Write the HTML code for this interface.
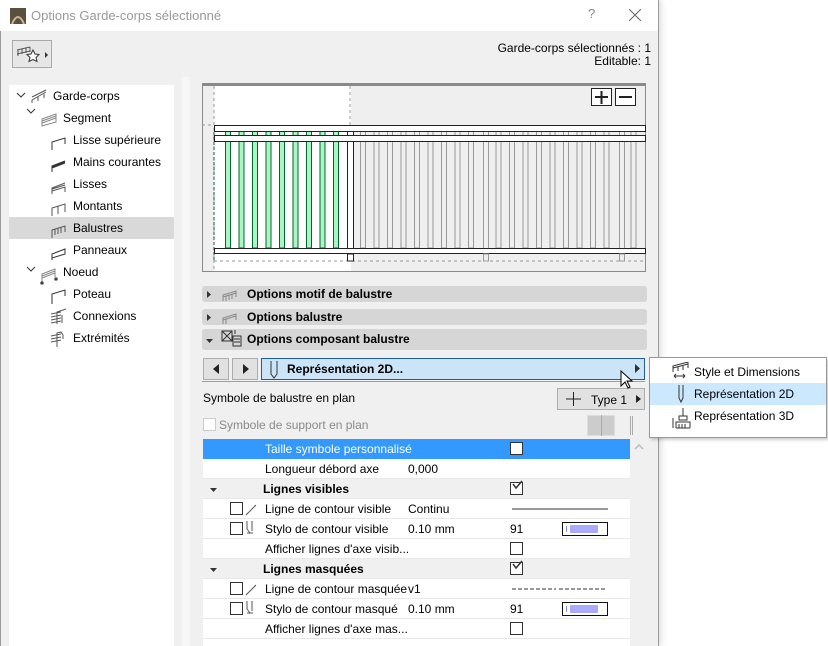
<!DOCTYPE html>
<html><head><meta charset="utf-8"><style>
*{box-sizing:border-box;margin:0;padding:0}
body{width:828px;height:646px;background:#fff;font-family:"Liberation Sans",sans-serif;font-size:12px;color:#000;position:relative;overflow:hidden}
.a{position:absolute}
.dlg{left:0;top:0;width:659px;height:646px;background:#f0f0f0;border-right:1px solid #9a9a9a;border-left:1px solid #9a9a9a;box-shadow:2px 0 6px rgba(0,0,0,.15)}
.title{left:0;top:0;width:658px;height:31px;background:#fff}
.tree{left:9px;top:85px;width:165px;height:561px;background:#fff}
.ti{position:absolute;height:22px;line-height:22px;font-size:12px}
.sec{position:absolute;left:202px;width:445px;background:#d6d6d6;border-radius:3px;font-weight:bold;font-size:12px}
.row{position:absolute;left:203px;width:427px;height:20px;line-height:20px;border-bottom:1px solid #e8e8e8;background:#fff}
.row.g{background:#f0f0f0}
.cb{position:absolute;width:13px;height:13px;border:1px solid #333;background:#fff}
.t{position:absolute;white-space:nowrap}
</style></head><body>
<div class="a dlg"></div>
<div class="a title"></div>
<svg class="a" style="left:10px;top:8px" width="16" height="16"><rect width="16" height="16" fill="#5a5040"/><path d="M2 16 Q8 2 14 16" stroke="#c8b890" stroke-width="2" fill="none"/></svg>
<div class="a t" style="left:31px;top:8px;font-size:13px;color:#999">Options Garde-corps sélectionné</div>
<div class="a t" style="left:588px;top:6px;font-size:13px;color:#888">?</div>
<svg class="a" style="left:629px;top:9px" width="12" height="12"><path d="M0 0L12 12M12 0L0 12" stroke="#666" stroke-width="1"/></svg>
<div class="a" style="left:12px;top:40px;width:40px;height:28px;border:1px solid #aaa;background:#e6e6e6"></div>
<svg class="a" style="left:16px;top:44px" width="34" height="20"><path d="M1 6L14 3M2 6v6M6 5v5M10 4v5M14 3v5M1 10L14 7" stroke="#555" fill="none"/><path d="M17 6l2 4 4 .5-3 3 1 4-4-2-4 2 1-4-3-3 4-.5z" stroke="#333" fill="#fff"/><path d="M29 8l3 3-3 3z" fill="#333"/></svg>
<div class="a t" style="right:177px;top:42px;text-align:right;line-height:13px">Garde-corps sélectionnés : 1<br>Editable: 1</div>

<div class="a tree"></div>
<div class="a" style="left:9px;top:217px;width:165px;height:22px;background:#d9d9d9"></div>
<div class="a" style="left:182px;top:77px;width:8px;height:569px;background:#f7f7f7"></div>
<svg class="a" style="left:14px;top:88px" width="60" height="260" fill="none" stroke="#555">
<path d="M3 5l4 4 4-4M13 21l4 4 4-4M13 179l4 4 4-4" stroke="#333"/>
<path d="M18 12L32 4M18 12v3M24 9v4M30 6v4M18 9L32 2" />
<path d="M28 31L42 26v8L28 38zM28 33l14-5M28 35l14-5" stroke="#888"/>
<path d="M38 62V54L51 50v6" stroke="#333"/>
<path d="M38 84V78L51 73M38 79l13-5M38 80l13-5" stroke="#333"/>
<path d="M38 106v-6l13-5M38 101l13-4M38 103l13-4v5" stroke="#555"/>
<path d="M38 128v-8l13-4v8M44 118v8" stroke="#555"/>
<path d="M38 150v-8l13-4v6M41 141v6M44 140v6M47 139v6" stroke="#555"/>
<path d="M38 172v-6l13-5v5l-13 4z" stroke="#333"/>
<path d="M28 194v-8l13-5v8M28 188l13-5M28 190l13-5" stroke="#888"/><circle cx="28" cy="195" r="1.3" fill="#333"/><circle cx="42" cy="191" r="1.3" fill="#333"/>
<path d="M38 216v-10l13-4v6" stroke="#333"/>
<path d="M37 226l10-2M37 229l10-2M37 232l10-2M37 235l10-2M43 236v-12l9-3M48 235v-8" stroke="#555"/>
<path d="M37 248l10-2M37 251l10-2M37 254l10-2M43 259v-14l4 -1 2 3v4" stroke="#555"/>
</svg>
<div class="ti" style="left:53px;top:85px">Garde-corps</div>
<div class="ti" style="left:63px;top:107px">Segment</div>
<div class="ti" style="left:73px;top:129px">Lisse supérieure</div>
<div class="ti" style="left:73px;top:151px">Mains courantes</div>
<div class="ti" style="left:73px;top:173px">Lisses</div>
<div class="ti" style="left:73px;top:195px">Montants</div>
<div class="ti" style="left:73px;top:217px">Balustres</div>
<div class="ti" style="left:73px;top:239px">Panneaux</div>
<div class="ti" style="left:63px;top:261px">Noeud</div>
<div class="ti" style="left:73px;top:283px">Poteau</div>
<div class="ti" style="left:73px;top:305px">Connexions</div>
<div class="ti" style="left:73px;top:327px">Extrémités</div>

<!-- preview -->
<svg class="a" style="left:202px;top:83px" width="445" height="190">
<rect x="0.5" y="0.5" width="443" height="188" fill="#efefef" stroke="#8a8a8a"/>
<rect x="1" y="1" width="442" height="2" fill="#8a8a8a"/>
<rect x="12" y="3" width="137" height="185" fill="#fff"/>
<path d="M12 3v185M148 3v42M0 42h11M12 178h431" stroke="#999" stroke-dasharray="3 3"/>
<path d="M12 49v130" stroke="#063" stroke-dasharray="3 2"/>
<g stroke="#999" fill="none">
<rect x="158.5" y="48" width="5" height="117"/><rect x="172" y="48" width="5" height="117"/><rect x="185.5" y="48" width="5" height="117"/><rect x="199" y="48" width="5" height="117"/><rect x="212.5" y="48" width="5" height="117"/><rect x="226" y="48" width="5" height="117"/><rect x="239.5" y="48" width="5" height="117"/><rect x="253" y="48" width="5" height="117"/><rect x="266.5" y="48" width="5" height="117"/><rect x="294" y="48" width="5" height="117"/><rect x="307.5" y="48" width="5" height="117"/><rect x="321" y="48" width="5" height="117"/><rect x="334.5" y="48" width="5" height="117"/><rect x="348" y="48" width="5" height="117"/><rect x="361.5" y="48" width="5" height="117"/><rect x="375" y="48" width="5" height="117"/><rect x="388.5" y="48" width="5" height="117"/><rect x="402" y="48" width="5" height="117"/><rect x="429" y="48" width="5" height="117"/>
</g>
<g stroke="#999" fill="#efefef"><rect x="281.5" y="48" width="5" height="130"/><rect x="417.5" y="48" width="5" height="130"/></g>
<g stroke="#063" fill="#aaf5c0">
<rect x="23.5" y="48" width="5" height="117"/><rect x="37" y="48" width="5" height="117"/><rect x="50.5" y="48" width="5" height="117"/><rect x="64" y="48" width="5" height="117"/><rect x="77.5" y="48" width="5" height="117"/><rect x="91" y="48" width="5" height="117"/><rect x="104.5" y="48" width="5" height="117"/><rect x="118" y="48" width="5" height="117"/><rect x="131.5" y="48" width="5" height="117"/>
</g>
<rect x="145.5" y="48" width="6" height="130" fill="#fff" stroke="#222"/>
<g stroke="#222" fill="#fff"><rect x="12.5" y="42.5" width="431" height="6"/><rect x="12.5" y="52.5" width="431" height="6"/><rect x="12.5" y="165.5" width="431" height="5"/></g>
<g stroke="#999" fill="#efefef"><rect x="281.5" y="171" width="5" height="7"/><rect x="417.5" y="171" width="5" height="7"/></g>
<rect x="145.5" y="171" width="6" height="7" fill="#fff" stroke="#222"/>
<g stroke="#222" fill="#fff"><rect x="389.5" y="5.5" width="20" height="17"/><rect x="413.5" y="5.5" width="20" height="17"/></g>
<path d="M393 14h13M399.5 8v13M417 14h13" stroke="#222" stroke-width="2"/>
</svg>

<div class="sec" style="top:286px;height:16px;line-height:16px"><span class="t" style="left:45px">Options motif de balustre</span></div>
<div class="sec" style="top:309px;height:16px;line-height:16px"><span class="t" style="left:45px">Options balustre</span></div>
<div class="sec" style="top:329px;height:21px;line-height:21px"><span class="t" style="left:45px">Options composant balustre</span></div>
<svg class="a" style="left:205px;top:287px" width="40" height="62" fill="none" stroke="#888">
<path d="M2 4l4 3.5-4 3.5z" fill="#333" stroke="none"/><path d="M2 27l4 3.5-4 3.5z" fill="#333" stroke="none"/><path d="M1 52l7 0-3.5 4z" fill="#333" stroke="none"/>
<path d="M18 14v-6l13-4v6M18 10l13-4M21 9v5M24 8v5M27 7v5"/>
<path d="M18 37v-6l13-4v6M18 33l13-4M21 32v5"/>
<path d="M17 44h10v10H17zM17 44l10 10M27 44l-10 10M30 43v4M28 49h8v10h-8zM29 52h6M29 55h6" stroke="#333"/>
</svg>

<!-- nav row -->
<div class="a" style="left:203px;top:358px;width:26px;height:22px;background:#e1e1e1;border:1px solid #adadad"></div>
<div class="a" style="left:232px;top:358px;width:26px;height:22px;background:#e1e1e1;border:1px solid #adadad"></div>
<svg class="a" style="left:203px;top:358px" width="60" height="22"><path d="M16 6l-6 5 6 5z" fill="#222"/><path d="M40 6l6 5-6 5z" fill="#222"/></svg>
<div class="a" style="left:261px;top:358px;width:384px;height:22px;background:#cce4f7;border:1px solid #1f5fa0"></div>
<svg class="a" style="left:268px;top:360px" width="14" height="20"><path d="M3 1v13l3 4 3-4V1" stroke="#333" fill="none"/></svg>
<div class="a t" style="left:287px;top:362px;font-weight:bold">Représentation 2D...</div>
<svg class="a" style="left:635px;top:364px" width="6" height="10"><path d="M0 0l5 4.5L0 9z" fill="#333"/></svg>
<div class="a" style="left:202px;top:381px;width:443px;height:1px;background:#a0a0a0"></div>
<div class="a t" style="left:203px;top:391px">Symbole de balustre en plan</div>
<div class="a" style="left:557px;top:388px;width:88px;height:22px;background:#e1e1e1;border:1px solid #adadad"></div>
<svg class="a" style="left:564px;top:391px" width="80" height="16"><path d="M2 8h15M9.5 1v14" stroke="#222"/><path d="M72 4l5 4-5 4z" fill="#222"/></svg>
<div class="a t" style="left:591px;top:393px">Type 1</div>
<div class="a" style="left:203px;top:418px;width:13px;height:13px;border:1px solid #ccc;background:#fff"></div>
<div class="a t" style="left:219px;top:418px;color:#8a8a8a">Symbole de support en plan</div>
<div class="a" style="left:587px;top:415px;width:28px;height:21px;background:#ccc;border:1px solid #ddd"></div>
<div class="a" style="left:601px;top:415px;width:1px;height:21px;background:#aaa"></div>
<div class="a" style="left:630px;top:416px;width:1px;height:19px;background:#aaa"></div>
<div class="a" style="left:632px;top:416px;width:1px;height:19px;background:#aaa"></div>

<!-- table -->
<div class="a" style="left:203px;top:439px;width:427px;height:207px;background:#fff"></div>
<div class="row" style="top:439px;background:#3399ff;color:#fff;border:none"><span class="t" style="left:62px">Taille symbole personnalisé</span></div>
<div class="row" style="top:459px"><span class="t" style="left:62px">Longueur débord axe</span><span class="t" style="left:205px">0,000</span></div>
<div class="row g" style="top:479px"><span class="t" style="left:60px;font-weight:bold">Lignes visibles</span></div>
<div class="row" style="top:499px"><span class="t" style="left:62px">Ligne de contour visible</span><span class="t" style="left:205px">Continu</span></div>
<div class="row" style="top:519px"><span class="t" style="left:62px">Stylo de contour visible</span><span class="t" style="left:205px">0.10 mm</span><span class="t" style="left:307px">91</span></div>
<div class="row" style="top:539px"><span class="t" style="left:62px">Afficher lignes d'axe visib...</span></div>
<div class="row g" style="top:559px"><span class="t" style="left:60px;font-weight:bold">Lignes masquées</span></div>
<div class="row" style="top:579px"><span class="t" style="left:62px">Ligne de contour masquée</span><span class="t" style="left:205px">v1</span></div>
<div class="row" style="top:599px"><span class="t" style="left:62px">Stylo de contour masqué</span><span class="t" style="left:205px">0.10 mm</span><span class="t" style="left:307px">91</span></div>
<div class="row" style="top:619px"><span class="t" style="left:62px">Afficher lignes d'axe mas...</span></div>
<div class="cb" style="left:510px;top:442px"></div>
<div class="cb" style="left:510px;top:482px"></div>
<div class="cb" style="left:510px;top:542px"></div>
<div class="cb" style="left:510px;top:562px"></div>
<div class="cb" style="left:510px;top:622px"></div>
<div class="cb" style="left:230px;top:502px"></div>
<div class="cb" style="left:230px;top:522px"></div>
<div class="cb" style="left:230px;top:582px"></div>
<div class="cb" style="left:230px;top:602px"></div>
<svg class="a" style="left:203px;top:479px" width="427" height="150" fill="none" stroke="#333">
<path d="M7 9l7 0-3.5 4z M7 89l7 0-3.5 4z" fill="#333" stroke="none"/>
<path d="M310 5l3 4 6-7M310 85l3 4 6-7" stroke-width="1.5"/>
<path d="M43 36l10-10M43 116l10-10" stroke="#555"/>
<path d="M44 54h6M49 42v10M44 42v8l3 4" stroke="#555"/>
<path d="M44 134h6M49 122v10M44 122v8l3 4" stroke="#555"/>
<path d="M309 30h96"/>
<path d="M309 110h44M356 110h48" stroke-dasharray="4 2"/>
<rect x="359.5" y="43.5" width="45" height="13" stroke="#111"/><rect x="363" y="47" width="1" height="6" fill="#8888ff" stroke="none"/><rect x="367" y="46" width="28" height="8" fill="#aaf" stroke="none"/>
<rect x="359.5" y="123.5" width="45" height="13" stroke="#111"/><rect x="363" y="127" width="1" height="6" fill="#8888ff" stroke="none"/><rect x="367" y="126" width="28" height="8" fill="#aaf" stroke="none"/>
</svg>
<svg class="a" style="left:634px;top:443px" width="10" height="8"><path d="M1 6l4-4 4 4" stroke="#bbb" fill="none" stroke-width="1.5"/></svg>

<!-- popup menu -->
<div class="a" style="left:649px;top:357px;width:178px;height:81px;background:#fff;border:1px solid #999;box-shadow:2px 2px 3px rgba(0,0,0,.2)"></div>
<div class="a" style="left:650px;top:383px;width:176px;height:22px;background:#cce8ff"></div>
<svg class="a" style="left:670px;top:362px" width="22" height="70" fill="none" stroke="#333">
<path d="M3 10V4l15-4v6M3 6l15-4M8 5v4M13 4v4M4 14h11M4 14l2-2M4 14l2 2M15 14l-2-2M15 14l-2 2"/>
<path d="M9 23v13l2 4 2-4V23"/>
<path d="M13 46v8M9 54h8v4H9zM6 66v-6h14v6M6 66h14M9 62v4M12 62v4M15 62v4M3 56v10"/>
</svg>
<div class="a t" style="left:694px;top:365px">Style et Dimensions</div>
<div class="a t" style="left:694px;top:387px">Représentation 2D</div>
<div class="a t" style="left:694px;top:409px">Représentation 3D</div>
<svg class="a" style="left:620px;top:370px" width="16" height="22"><path d="M1 1v15l4-4 3 6 2-1-3-6h5z" fill="#fff" stroke="#000"/></svg>
</body></html>
